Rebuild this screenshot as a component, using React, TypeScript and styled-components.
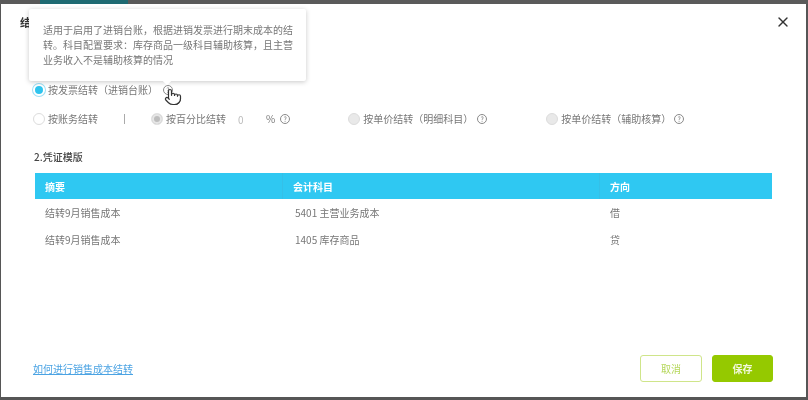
import React from "react";
import styled, { createGlobalStyle } from "styled-components";
import { Pointer, X } from "lucide-react";

const Global = createGlobalStyle`
  html, body { margin: 0; padding: 0; background: #565656; }
  body { font-family: "Noto Sans CJK SC", "Liberation Sans", sans-serif; }
  * { box-sizing: border-box; }
`;
const Page = styled.div`
  width: 808px; height: 400px; overflow: hidden; background: #565656;
  display: flex; flex-direction: column; filter: blur(0.55px);
`;
const TopStrip = styled.div`
  height: 4px; flex: none; display: flex; padding-left: 40px; background: #5a5a5a;
`;
const TealPiece = styled.div`
  width: 88px; background: #1f6a72;
`;
const Modal = styled.div`
  position: relative; margin: 0 2px 3px 1px; flex: 1; background: #fff;
  display: flex; flex-direction: column; color: #777; font-size: 10px;
`;
const Header = styled.div`
  height: 36px; flex: none; display: flex; align-items: center; justify-content: space-between;
  padding: 0 15px 0 19px;
`;
const Title = styled.div`
  font-size: 11px; font-weight: 700; color: #333;
`;
const CloseButton = styled.div`
  display: flex; color: #333;
`;
const Body = styled.div`
  flex: 1; display: flex; flex-direction: column; padding: 0 33px 0 32px;
`;
const RadioRow = styled.div<{ $top: number }>`
  height: 16px; margin-top: ${p => p.$top}px; display: flex; align-items: center;
`;
const RadioItem = styled.div<{ $width?: number; $left?: number }>`
  display: flex; align-items: center; flex: none;
  ${p => p.$width ? `width: ${p.$width}px;` : ""}
  ${p => p.$left ? `margin-left: ${p.$left}px;` : ""}
`;
const RadioDot = styled.span<{ $state: "on" | "off" | "disabled" | "disabledOn" }>`
  width: 12px; height: 12px; border-radius: 50%; flex: none; margin-right: 3px;
  background: ${p => p.$state === "on" ? "#2fc4ee" : p.$state === "off" ? "#fff" : p.$state === "disabledOn" ? "#bdbdbd" : "#e9e9e9"};
  border: 1px solid ${p => p.$state === "disabledOn" ? "#e2e2e2" : "#dcdcdc"};
  ${p => p.$state === "on" ? "border: 2px solid #fff; box-shadow: 0 0 0 1px #9fe0f5;" : ""}
  ${p => p.$state === "disabledOn" ? "box-shadow: inset 0 0 0 2px #e6e6e6;" : ""}
`;
const Label = styled.span`
  font-size: 10px; line-height: 14px; color: #777; white-space: nowrap;
`;
const Help = styled.span<{ $left: number }>`
  width: 10px; height: 10px; flex: none; margin-left: ${p => p.$left}px; border-radius: 50%;
  border: 1px solid #8a8a8a; font-size: 7px; line-height: 8px; text-align: center; color: #777;
`;
const Divider = styled.span`
  width: 1px; height: 10px; background: #aaa; margin: 0 26px 0 26px; flex: none;
`;
const Amount = styled.span`
  width: 28px; margin-left: 12px; color: #bbb; flex: none;
`;
const SectionTitle = styled.div`
  margin-top: 23px; height: 14px; line-height: 14px; font-size: 10px; color: #444;
  padding-left: 1px; font-weight: 500;
`;
const Table = styled.div`
  margin: 9px 1px 0 2px; display: flex; flex-direction: column;
`;
const Row = styled.div<{ $head?: boolean }>`
  display: grid; grid-template-columns: 248px 317px 1fr; align-items: center;
  height: ${p => p.$head ? 26 : 27}px;
  ${p => p.$head ? "background: #2fc8f2; color: #fff; font-weight: 700;" : "color: #777;"}
`;
const Cell = styled.div<{ $head?: boolean; $pad?: number }>`
  padding-left: ${p => p.$pad ?? 10}px; height: 100%; display: flex; align-items: center;
  font-size: 10px; white-space: nowrap;
  ${p => p.$head ? "border-right: 1px solid #35c0e8;" : ""}
`;
const Footer = styled.div`
  margin-top: auto; height: 27px; margin-bottom: 15px; display: flex; align-items: center;
  justify-content: space-between;
`;
const HelpLink = styled.a`
  color: #4ba3e3; font-size: 10px; text-decoration: underline;
`;
const Buttons = styled.div`
  display: flex; gap: 10px;
`;
const Button = styled.div<{ $primary?: boolean }>`
  width: ${p => p.$primary ? 61 : 62}px; height: 27px; border-radius: 3px; display: flex; align-items: center; justify-content: center;
  font-size: 10px; font-weight: ${p => p.$primary ? 700 : 400};
  background: ${p => p.$primary ? "#95c900" : "#fff"};
  border: 1px solid ${p => p.$primary ? "#95c900" : "#cfe58a"};
  color: ${p => p.$primary ? "#f1f8d8" : "#b5d75a"};
`;
const Tooltip = styled.div`
  position: absolute; left: 28px; top: 5px; width: 277px; height: 72px; background: #fff;
  padding: 13px 12px 0 14px; font-size: 10px; line-height: 15px; color: #777; border-radius: 2px;
  box-shadow: 0 1px 5px rgba(0,0,0,.22);
  &::after {
    content: ""; position: absolute; left: 135px; bottom: -3px; width: 6px; height: 6px;
    background: #fff; transform: rotate(45deg);
  }
`;
const Cursor = styled.div`
  position: absolute; left: 163px; top: 84px; color: #333; display: flex;
  svg { fill: #fff; }
`;

export default function App() {
  return (
    <Page>
      <Global />
      <TopStrip><TealPiece /></TopStrip>
      <Modal>
        <Header>
          <Title>结转销售成本</Title>
          <CloseButton><X size={16} strokeWidth={2} /></CloseButton>
        </Header>
        <Body>
          <RadioRow $top={42}>
            <RadioItem>
              <RadioDot $state="on" />
              <Label>按发票结转（进销台账）</Label>
              <Help $left={5}>?</Help>
            </RadioItem>
          </RadioRow>
          <RadioRow $top={13}>
            <RadioItem>
              <RadioDot $state="off" />
              <Label>按账务结转</Label>
            </RadioItem>
            <Divider />
            <RadioItem>
              <RadioDot $state="disabledOn" />
              <Label>按百分比结转</Label>
            </RadioItem>
            <Amount>0</Amount>
            <Label>%</Label>
            <Help $left={5}>?</Help>
            <RadioItem $width={198} $left={58}>
              <RadioDot $state="disabled" />
              <Label>按单价结转（明细科目）</Label>
              <Help $left={4}>?</Help>
            </RadioItem>
            <RadioItem>
              <RadioDot $state="disabled" />
              <Label>按单价结转（辅助核算）</Label>
              <Help $left={3}>?</Help>
            </RadioItem>
          </RadioRow>
          <SectionTitle>2.凭证模版</SectionTitle>
          <Table>
            <Row $head>
              <Cell $head>摘要</Cell>
              <Cell $head>会计科目</Cell>
              <Cell>方向</Cell>
            </Row>
            <Row>
              <Cell>结转9月销售成本</Cell>
              <Cell $pad={12}>5401 主营业务成本</Cell>
              <Cell>借</Cell>
            </Row>
            <Row>
              <Cell>结转9月销售成本</Cell>
              <Cell $pad={12}>1405 库存商品</Cell>
              <Cell>贷</Cell>
            </Row>
          </Table>
          <Footer>
            <HelpLink>如何进行销售成本结转</HelpLink>
            <Buttons>
              <Button>取消</Button>
              <Button $primary>保存</Button>
            </Buttons>
          </Footer>
        </Body>
        <Tooltip>适用于启用了进销台账，根据进销发票进行期末成本的结转。科目配置要求：库存商品一级科目辅助核算，且主营业务收入不是辅助核算的情况</Tooltip>
        <Cursor><Pointer size={18} strokeWidth={1.6} /></Cursor>
      </Modal>
    </Page>
  );
}
